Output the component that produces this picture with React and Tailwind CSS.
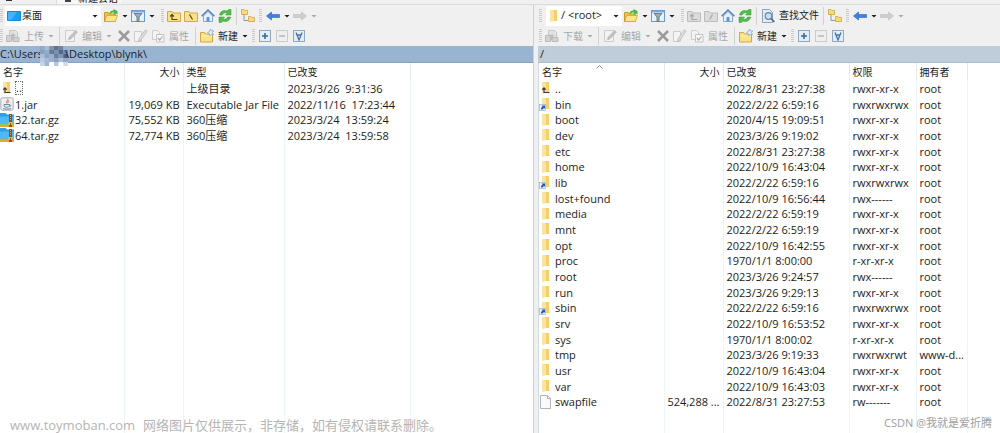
import { useState } from "react";

const localFiles = [
  { name: "..", icon: "up", size: "", type: "上级目录", date: "2023/3/26  9:31:36" },
  { name: "1.jar", icon: "jar", size: "19,069 KB", type: "Executable Jar File", date: "2022/11/16  17:23:44" },
  { name: "32.tar.gz", icon: "zip", size: "75,552 KB", type: "360压缩", date: "2023/3/24  13:59:24" },
  { name: "64.tar.gz", icon: "zip", size: "72,774 KB", type: "360压缩", date: "2023/3/24  13:59:58" },
];

const remoteFiles = [
  { name: "..", icon: "up", date: "2022/8/31 23:27:38", rights: "rwxr-xr-x", owner: "root" },
  { name: "bin", icon: "link", date: "2022/2/22 6:59:16", rights: "rwxrwxrwx", owner: "root" },
  { name: "boot", icon: "folder", date: "2020/4/15 19:09:51", rights: "rwxr-xr-x", owner: "root" },
  { name: "dev", icon: "folder", date: "2023/3/26 9:19:02", rights: "rwxr-xr-x", owner: "root" },
  { name: "etc", icon: "folder", date: "2022/8/31 23:27:38", rights: "rwxr-xr-x", owner: "root" },
  { name: "home", icon: "folder", date: "2022/10/9 16:43:04", rights: "rwxr-xr-x", owner: "root" },
  { name: "lib", icon: "link", date: "2022/2/22 6:59:16", rights: "rwxrwxrwx", owner: "root" },
  { name: "lost+found", icon: "folder", date: "2022/10/9 16:56:44", rights: "rwx------", owner: "root" },
  { name: "media", icon: "folder", date: "2022/2/22 6:59:19", rights: "rwxr-xr-x", owner: "root" },
  { name: "mnt", icon: "folder", date: "2022/2/22 6:59:19", rights: "rwxr-xr-x", owner: "root" },
  { name: "opt", icon: "folder", date: "2022/10/9 16:42:55", rights: "rwxr-xr-x", owner: "root" },
  { name: "proc", icon: "folder", date: "1970/1/1 8:00:00", rights: "r-xr-xr-x", owner: "root" },
  { name: "root", icon: "folder", date: "2023/3/26 9:24:57", rights: "rwx------", owner: "root" },
  { name: "run", icon: "folder", date: "2023/3/26 9:29:13", rights: "rwxr-xr-x", owner: "root" },
  { name: "sbin", icon: "link", date: "2022/2/22 6:59:16", rights: "rwxrwxrwx", owner: "root" },
  { name: "srv", icon: "folder", date: "2022/10/9 16:53:52", rights: "rwxr-xr-x", owner: "root" },
  { name: "sys", icon: "folder", date: "1970/1/1 8:00:02", rights: "r-xr-xr-x", owner: "root" },
  { name: "tmp", icon: "folder", date: "2023/3/26 9:19:33", rights: "rwxrwxrwt", owner: "www-d..." },
  { name: "usr", icon: "folder", date: "2022/10/9 16:43:04", rights: "rwxr-xr-x", owner: "root" },
  { name: "var", icon: "folder", date: "2022/10/9 16:43:03", rights: "rwxr-xr-x", owner: "root" },
  { name: "swapfile", icon: "file", size: "524,288 ...", date: "2022/8/31 23:27:53", rights: "rw-------", owner: "root" },
];

const Svg = ({ children }) => (
  <svg viewBox="0 0 14 14" className="block h-3.5 w-3.5 shrink-0" fill="none" aria-hidden="true">
    {children}
  </svg>
);

/* Toolbar icons */
const OpenFolderIcon = () => (
  <Svg>
    <path d="M.5 12.500V3.500h4l1 1.500h6v7.500z" fill="#e9c24b" stroke="#c29a33" />
    <path d="M.8 12.500 2.800 6.500h10.700l-2.200 6z" fill="#fbe68a" stroke="#cfa63c" strokeWidth=".8" />
    <path d="M5.500 4.500C6 2.500 7.500 1.300 9.500 1.500V0L13.500 2v3.500l-1.500-1-2 .8V3.800C8.800 3.200 7.500 3.500 7 4.800z" fill="#4db548" />
  </Svg>
);

const FilterIcon = () => (
  <Svg>
    <rect x=".5" y="1.500" width="13" height="11" fill="#e8f1fb" stroke="#6b9bd6" />
    <path d="M1 2h12v1.500H1z" fill="#7dabe4" />
    <path d="M3 4.500h8L8 8v4.500H6V8z" fill="#a3aab1" stroke="#626c76" strokeWidth=".8" />
  </Svg>
);

const ParentIcon = ({ off }) => (
  <Svg>
    <path d="M.5 12.500V2.500h4.500l1 1.500h7.500v8.500z" fill={off ? "#dcdcdc" : "#f9e08a"} stroke={off ? "#bcbcbc" : "#cfaa48"} />
    <path d="M10.500 10.500H5V6M3.200 7.500 5 5.500l1.800 2" stroke={off ? "#a8a8a8" : "#54481c"} strokeWidth="1.200" />
  </Svg>
);

const RootIcon = ({ off }) => (
  <Svg>
    <path d="M.5 12.500V2.500h4.500l1 1.500h7.500v8.500z" fill={off ? "#dcdcdc" : "#f9e08a"} stroke={off ? "#bcbcbc" : "#cfaa48"} />
    <path d={off ? "M5.500 10.500 8.500 5.500" : "M5.500 5.500 8.500 10.500"} stroke={off ? "#a8a8a8" : "#54481c"} strokeWidth="1.200" />
  </Svg>
);

const HomeIcon = () => (
  <Svg>
    <path d="M2.500 7 7 2.500 11.500 7v5.500h-9z" fill="#eaf1fa" stroke="#8aa8cc" />
    <path d="M.6 7.300 7 1l6.400 6.300" stroke="#4f82bd" strokeWidth="1.400" />
    <path d="M5.500 8h3v4.500h-3z" fill="#5b96d8" />
  </Svg>
);

const RefreshIcon = () => (
  <Svg>
    <path d="M1.500 6C2 2.500 5.500.5 9 2l1.500-1.500H13V6H7.500l1.700-1.800C7 3.300 5 4 4.300 6z" fill="#52bd4a" stroke="#36982f" strokeWidth=".5" />
    <path d="M12.500 8c-.5 3.500-4 5.500-7.500 4l-1.500 1.500H1V8h5.500L4.800 9.800C7 10.700 9 10 9.700 8z" fill="#52bd4a" stroke="#36982f" strokeWidth=".5" />
  </Svg>
);

const TreeIcon = () => (
  <Svg>
    <path d="M3 5v6.500h4" stroke="#8a97a8" />
    <path d="M.5 5.500v-5h2.500l.6.900h3v4.100zM7.500 12.500v-5H10l.6.900h3v4.100z" fill="#f8dc70" stroke="#cba640" strokeWidth=".8" />
  </Svg>
);

const ArrowIcon = ({ forward }) => (
  <Svg>
    {forward ? (
      <path d="M13.500 7 8.500 3v2.500h-8v3h8V11z" fill="#cfcfcf" stroke="#bababa" strokeWidth=".6" />
    ) : (
      <path d="M.5 7 5.500 3v2.500h8v3h-8V11z" fill="#3f83e2" stroke="#2360bd" strokeWidth=".6" />
    )}
  </Svg>
);

const FindIcon = () => (
  <Svg>
    <path d="M1.500.5h7l3 3v10h-10z" fill="#e4edf7" stroke="#8aa3c0" />
    <circle cx="7.500" cy="7" r="3.300" fill="#c6e1f4" stroke="#6d869e" strokeWidth="1.200" />
    <path d="m10 9.500 3.300 3.500" stroke="#55697f" strokeWidth="1.800" />
  </Svg>
);

const TransferIcon = ({ down }) => (
  <Svg>
    <path d="M3.500 1.500h6l2 2v7h-8z" fill="#e2e2e2" stroke="#c8c8c8" />
    <path d="M.5 6.500h5v6h-5zM7 8.500h6v4H7z" fill="#d2d2d2" stroke="#bcbcbc" />
    <path d={down ? "M5.500 5.500h3V8H10l-3 3-3-3h1.500z" : "M5.500 10.500h3V7H10L7 4 4 7h1.500z"} fill="#bcbcbc" />
  </Svg>
);

const EditIcon = () => (
  <Svg>
    <path d="M1.500 1.500h9v11h-9z" fill="#f2f2f2" stroke="#cccccc" />
    <path d="m4.500 10.800.6-2.600L11.800 1.500 13.400 3 7 9.800z" fill="#c2c2c2" stroke="#adadad" strokeWidth=".6" />
  </Svg>
);

const DeleteIcon = () => (
  <Svg>
    <path d="m2 2 10 10M12 2 2 12" stroke="#9c9c9c" strokeWidth="2.600" />
  </Svg>
);

const RenameIcon = () => (
  <Svg>
    <path d="M.5 2.500h7v10h-7z" fill="#f4f4f4" stroke="#cccccc" />
    <path d="m4.500 12.500.5-2.800L11.300.8l1.900 1.400L7 11z" fill="#dedede" stroke="#b4b4b4" strokeWidth=".7" />
  </Svg>
);

const PropsIcon = () => (
  <Svg>
    <path d="M1.500 1.500h5l2 2v7h-7z" fill="#f4f4f4" stroke="#cccccc" />
    <path d="M5.500 5.500h7.500v7.500H5.500z" fill="#f6f6f6" stroke="#c4c4c4" />
    <path d="m7 9 1.700 2L11.500 7.500" stroke="#a8a8a8" strokeWidth="1.200" />
  </Svg>
);

const NewFolderIcon = () => (
  <Svg>
    <path d="M.5 13V3.500h4l1 1.500h7v8z" fill="#f9e384" stroke="#cfaa44" />
    <path d="M1 7h11" stroke="#fdf1b4" />
    <path d="m10.500 0 .9 1.700 2.300.1-1.200 1.900.9 2-2.200-.2-1.500 1.400-.5-2.100L7.500 3.500l1.900-1z" fill="#dcebf8" stroke="#7f9dc0" strokeWidth=".7" />
  </Svg>
);

const SquareIcon = ({ kind }) => (
  <Svg>
    <rect x="1.500" y="1.500" width="11" height="11" fill={kind === "minus" ? "#efefef" : "#e3eef9"} stroke={kind === "minus" ? "#cccccc" : "#8fa9c4"} />
    {kind === "plus" && <path d="M7 4v6M4 7h6" stroke="#3a6898" strokeWidth="1.600" />}
    {kind === "minus" && <path d="M4 7h6" stroke="#b4b4b4" strokeWidth="1.400" />}
    {kind === "all" && <path d="M4 3.500 7 11l3-7.500M4.800 6h4.400" stroke="#4a749e" strokeWidth="1.300" />}
  </Svg>
);

const DesktopIcon = () => (
  <Svg>
    <path d="M.5 2.500h13v9H.5z" fill="#1f9cf0" stroke="#1c86d6" />
    <path d="M1 3h9L4 11H1z" fill="#43b4fa" />
  </Svg>
);

/* File list icons */
const FileIcon = ({ kind }) => {
  if (kind === "jar") {
    return (
      <Svg>
        <rect x=".8" y=".8" width="12.400" height="12.400" rx="1.500" fill="#edf0f3" stroke="#a4adb6" />
        <path d="M7.500 2c1.500 1.500-2.500 2.500-.5 4.500M9 3.500C7.500 4.500 8 5 8 6" stroke="#d9622b" />
        <path d="M4 7.500h5.500v1.700C9 10.500 4.500 10.500 4 9.200zM9.500 8c1.800-.3 1.500 1.500 0 1.500M3 11.500c2 .8 6 .8 8 0" stroke="#5f7d9c" strokeWidth=".9" />
      </Svg>
    );
  }
  if (kind === "zip") {
    return (
      <Svg>
        <path d="M0 0h5.500L7 1.500h7v12H0z" fill="#2f9fe8" />
        <path d="M0 3.500h14v7H0z" fill="#4db9f7" />
        <path d="M0 10.500h14v1.500H0z" fill="#8cc665" />
        <path d="M0 12h14v2H0z" fill="#eda32c" />
        <path d="M9 1h3v13H9z" fill="#8f4f22" />
        <path d="M10.500 2v6" stroke="#e5a550" strokeDasharray="1 1" />
        <path d="M8.500 9h4v3h-4z" fill="#f4b53f" />
        <path d="M10 10h1v2h-1z" fill="#8f4f22" />
      </Svg>
    );
  }
  if (kind === "file") {
    return (
      <Svg>
        <path d="M1.500.5h7l3 3v10h-10z" fill="#fafafa" stroke="#b4b4b4" />
        <path d="M8.500.5v3h3" stroke="#b4b4b4" />
      </Svg>
    );
  }
  return (
    <Svg>
      <path d="M5.500 1H10v9.500l.5 1v.500h-5z" fill="#f6cf6a" />
      <path d="M3 1h3l1 2v9L4 13l-1-1z" fill="#fde3a0" />
      {kind === "up" && <path d="M10.500 11.500H5V7M3.300 8.700 5 6.800l1.700 1.900" stroke="#3a3a3a" strokeWidth="1.200" />}
      {kind === "link" && (
        <>
          <rect x=".5" y="7.500" width="6" height="6" fill="#eef4fb" stroke="#9fb2c8" strokeWidth=".7" />
          <path d="M2 12.500V11l1.500-1.500L2.500 8.500H6V12l-1-1-1.500 1.500z" fill="#1d5fb4" />
        </>
      )}
    </Svg>
  );
};

/* Toolbar parts */
const Caret = ({ off }) => (
  <svg viewBox="0 0 13 14" className="block h-3.5 w-[13px] shrink-0" aria-hidden="true">
    <path d="M4.500 6h5L7 8.500z" fill={off ? "#a8a8a8" : "#1c1c1c"} />
  </svg>
);

const Grip = () => (
  <svg viewBox="0 0 3 14" className="block h-3.5 w-[3px] shrink-0" aria-hidden="true">
    <path d="M1.500 0v14" stroke="#cacaca" strokeWidth="3" strokeDasharray="1 1" />
  </svg>
);

const Sep = () => <div className="h-[18px] w-px shrink-0 bg-[#d2d2d2]" />;

const Tool = ({ label, text, caret, off, children }) => (
  <button type="button" aria-label={label} disabled={off} className="flex shrink-0 items-center">
    {children}
    {text && (
      <span className={off ? "ml-1 text-[10px] text-[#a6a6a6]" : "ml-1 text-[10px]"}>{text}</span>
    )}
    {caret && <Caret off={off} />}
  </button>
);

const NavTools = () => (
  <div className="flex items-center">
    <Tool label="打开目录" caret><OpenFolderIcon /></Tool>
    <Tool label="过滤" caret><FilterIcon /></Tool>
  </div>
);

const HistoryTools = () => (
  <div className="flex items-center">
    <Tool label="后退" caret><ArrowIcon /></Tool>
    <Tool label="前进" caret off><ArrowIcon forward /></Tool>
  </div>
);

const FileTools = ({ down }) => (
  <div className="flex h-5 items-center">
    <Grip />
    <div className="ml-[3px] flex items-center">
      <Tool label={down ? "下载" : "上传"} text={down ? "下载" : "上传"} caret off>
        <TransferIcon down={down} />
      </Tool>
    </div>
    <div className="ml-0.5 flex items-center gap-1">
      <Sep />
      <Tool label="编辑" text="编辑" caret off><EditIcon /></Tool>
    </div>
    <div className="ml-0.5 flex items-center gap-[3px]">
      <Tool label="删除" off><DeleteIcon /></Tool>
      <Tool label="重命名" off><RenameIcon /></Tool>
      <Tool label="属性" text="属性" off><PropsIcon /></Tool>
    </div>
    <div className="ml-1.5 flex items-center gap-1">
      <Sep />
      <Tool label="新建" text="新建" caret><NewFolderIcon /></Tool>
    </div>
    <div className="ml-px flex items-center gap-[3px]">
      <Grip />
      <Tool label="选择"><SquareIcon kind="plus" /></Tool>
      <Tool label="取消选择" off><SquareIcon kind="minus" /></Tool>
      <Tool label="全选"><SquareIcon kind="all" /></Tool>
    </div>
  </div>
);

const FileTable = ({ label, columns, rows, remote }) => (
  <table aria-label={label} className="h-full w-full table-fixed border-collapse text-left text-[11px] leading-[15px]">
    <colgroup>
      {columns.map((col) => (
        <col key={col.key} className={col.width} />
      ))}
      <col />
    </colgroup>
    <thead>
      <tr className="h-[17px]">
        {columns.map((col) => (
          <th
            key={col.key}
            scope="col"
            className={`relative border-r border-[#e4e9ee] pt-0.5 pb-0 text-[10px] font-normal ${col.right ? "pr-[3px] text-right" : "pl-[3px]"}`}
          >
            {col.title}
            {remote && col.key === "name" && (
              <svg viewBox="0 0 7 4" className="absolute top-0.5 left-[46%] h-1 w-[7px]" fill="none" aria-hidden="true">
                <path d="M.5 3.500 3.500.5l3 3" stroke="#8c8c8c" />
              </svg>
            )}
          </th>
        ))}
        <td />
      </tr>
    </thead>
    <tbody>
      {rows.map((row) => (
        <tr key={row.name} className="h-4 [&:nth-child(3n)]:h-[15px]">
          {columns.map((col) =>
            col.key === "name" ? (
              <td key={col.key} className="border-r border-[#edf4fa] p-0">
                <div className={remote ? "flex items-center gap-0.5" : "flex items-center gap-px"}>
                  <FileIcon kind={row.icon} />
                  <span className={!remote && row.icon === "up" ? "h-3.5 border border-dotted border-gray-500 leading-3" : ""}>
                    {row.name}
                  </span>
                </div>
              </td>
            ) : (
              <td
                key={col.key}
                className={`truncate border-r border-[#edf4fa] py-0 whitespace-pre ${col.right ? "pr-[3px] text-right" : "pl-[3px]"}`}
              >
                {row[col.key]}
              </td>
            )
          )}
          <td />
        </tr>
      ))}
      <tr>
        {columns.map((col) => (
          <td key={col.key} className="border-r border-[#edf4fa] p-0" />
        ))}
        <td />
      </tr>
    </tbody>
  </table>
);

const localColumns = [
  { key: "name", title: "名字", width: "w-[124px]" },
  { key: "size", title: "大小", width: "w-[59px]", right: true },
  { key: "type", title: "类型", width: "w-[101px]" },
  { key: "date", title: "已改变", width: "w-[126px]" },
];

const remoteColumns = [
  { key: "name", title: "名字", width: "w-[125px]" },
  { key: "size", title: "大小", width: "w-[59px]", right: true },
  { key: "date", title: "已改变", width: "w-[126px]" },
  { key: "rights", title: "权限", width: "w-[67px]" },
  { key: "owner", title: "拥有者", width: "w-[51px]" },
];

// Pixelated user name in the local path
const mosaic = [
  ["#8fa9c8", "#a5bcd6", "#7d93b0", "#5f728f", "#6f84a3", "#9bb3cf"],
  ["#86a0c0", "#93accb", "#66799a", "#7c90ae", "#56688a", "#7388a6"],
  ["#a9c0da", "#8ba5c5", "#98b0cf", "#6c80a0", "#8097b5", "#4f607e"],
  ["#b5cae0", "#a4bbd7", "#9ab2d0", "#8aa3c2", "#a7bdd8", "#93a9c6"],
  ["#c5d4e5", "#9db5d1", "#ffffff", "#b3c7de", "#ffffff", "#d5dae0"],
];

const App = () => {
  const [localDir, setLocalDir] = useState("desktop");
  const [remoteDir, setRemoteDir] = useState("root");

  return (
    <div className="relative flex h-screen flex-col overflow-hidden bg-[#f0f0f0] font-['Open_Sans','Noto_Sans_CJK_SC',sans-serif] text-[#1c1c1c]">
      {/* Session tabs */}
      <div className="flex h-[5px] shrink-0 items-end overflow-hidden border-b border-[#dcdcdc]">
        <div className="flex h-full w-[57px] items-start border-r border-[#dcdcdc] pl-1.5">
          <div className="h-px w-1.5 bg-[#333]" />
        </div>
        <div className="flex h-full w-16 items-start gap-[7px] bg-[#f7f7f7] pl-2">
          <div className="h-0.5 w-1.5 bg-[#444]" />
          <div className="flex h-full items-end text-[10px] leading-3">新建会话</div>
        </div>
      </div>

      <div className="grid min-h-0 flex-1 grid-cols-[533fr_467fr]">
        {/* Local panel */}
        <section className="flex min-h-0 min-w-0 flex-col">
          <div className="flex h-[21px] shrink-0 items-center">
            <Grip />
            <div className="ml-0.5 flex h-5 w-24 items-center gap-px bg-white pl-0.5">
              <DesktopIcon />
              <select
                aria-label="本地目录"
                value={localDir}
                onChange={(e) => setLocalDir(e.target.value)}
                className="min-w-0 flex-1 appearance-none text-[10px] outline-none"
              >
                <option value="desktop">桌面</option>
              </select>
              <Caret />
            </div>
            <div className="ml-[3px] flex items-center gap-[3px]">
              <NavTools />
              <Grip />
              <Tool label="上级目录"><ParentIcon /></Tool>
              <Tool label="根目录"><RootIcon /></Tool>
              <Tool label="主目录"><HomeIcon /></Tool>
              <Tool label="刷新"><RefreshIcon /></Tool>
            </div>
            <div className="ml-1 flex items-center gap-1">
              <Sep />
              <Tool label="目录树"><TreeIcon /></Tool>
              <Grip />
              <HistoryTools />
            </div>
          </div>
          <FileTools />
          <div className="flex h-[17px] shrink-0 items-center border-b border-[#86a2c2] bg-[#99b4d1] text-[11px] leading-4">
            <span>C:\Users</span>
            <svg viewBox="0 0 6 5" className="relative z-10 -mx-[3px] mt-1 h-5 w-7 shrink-0" preserveAspectRatio="none" aria-hidden="true">
              {mosaic.map((line, y) =>
                line.map((color, x) => <rect key={`${x}-${y}`} x={x} y={y} width="1" height="1" fill={color} />)
              )}
            </svg>
            <span className="relative z-20">\Desktop\blynk\</span>
          </div>
          <div className="min-h-0 flex-1 bg-white">
            <FileTable label="本地文件" columns={localColumns} rows={localFiles} />
          </div>
        </section>

        {/* Remote panel */}
        <section className="flex min-h-0 min-w-0 flex-col border-l border-[#d0d0d0] pl-1">
          <div className="flex h-[21px] shrink-0 items-center pl-px">
            <Grip />
            <div className="ml-1 flex h-5 w-[76px] items-center bg-white pl-px">
              <FileIcon kind="folder" />
              <select
                aria-label="远程目录"
                value={remoteDir}
                onChange={(e) => setRemoteDir(e.target.value)}
                className="min-w-0 flex-1 appearance-none text-[11px] outline-none"
              >
                <option value="root">/ &lt;root&gt;</option>
              </select>
              <Caret />
            </div>
            <div className="ml-0.5 flex items-center gap-[3px]">
              <NavTools />
              <Grip />
              <Tool label="上级目录" off><ParentIcon off /></Tool>
              <Tool label="根目录" off><RootIcon off /></Tool>
              <Tool label="主目录"><HomeIcon /></Tool>
              <Tool label="刷新"><RefreshIcon /></Tool>
            </div>
            <div className="ml-1 flex items-center gap-1">
              <Sep />
              <Tool label="查找文件" text="查找文件"><FindIcon /></Tool>
              <Sep />
              <Tool label="目录树"><TreeIcon /></Tool>
              <Grip />
              <HistoryTools />
            </div>
          </div>
          <div className="pl-px">
            <FileTools down />
          </div>
          <div className="h-[17px] shrink-0 border-b border-[#aebccb] bg-[#bfcddb] pl-0.5 text-[11px] leading-4">/</div>
          <div className="min-h-0 flex-1 border-l border-[#cfdce8] bg-white">
            <FileTable label="远程文件" columns={remoteColumns} rows={remoteFiles} remote />
          </div>
        </section>
      </div>

      <p className="absolute bottom-0 left-2.5 flex items-center gap-2 text-[13px] leading-4 text-[#b5b5b5]">
        <span>www.toymoban.com</span>
        <span>网络图片仅供展示，非存储，如有侵权请联系删除。</span>
      </p>
      <p className="absolute right-2 bottom-0.5 text-[11px] leading-4 text-[#a0a0a0]">CSDN @我就是爱折腾</p>
    </div>
  );
};

export default App;
